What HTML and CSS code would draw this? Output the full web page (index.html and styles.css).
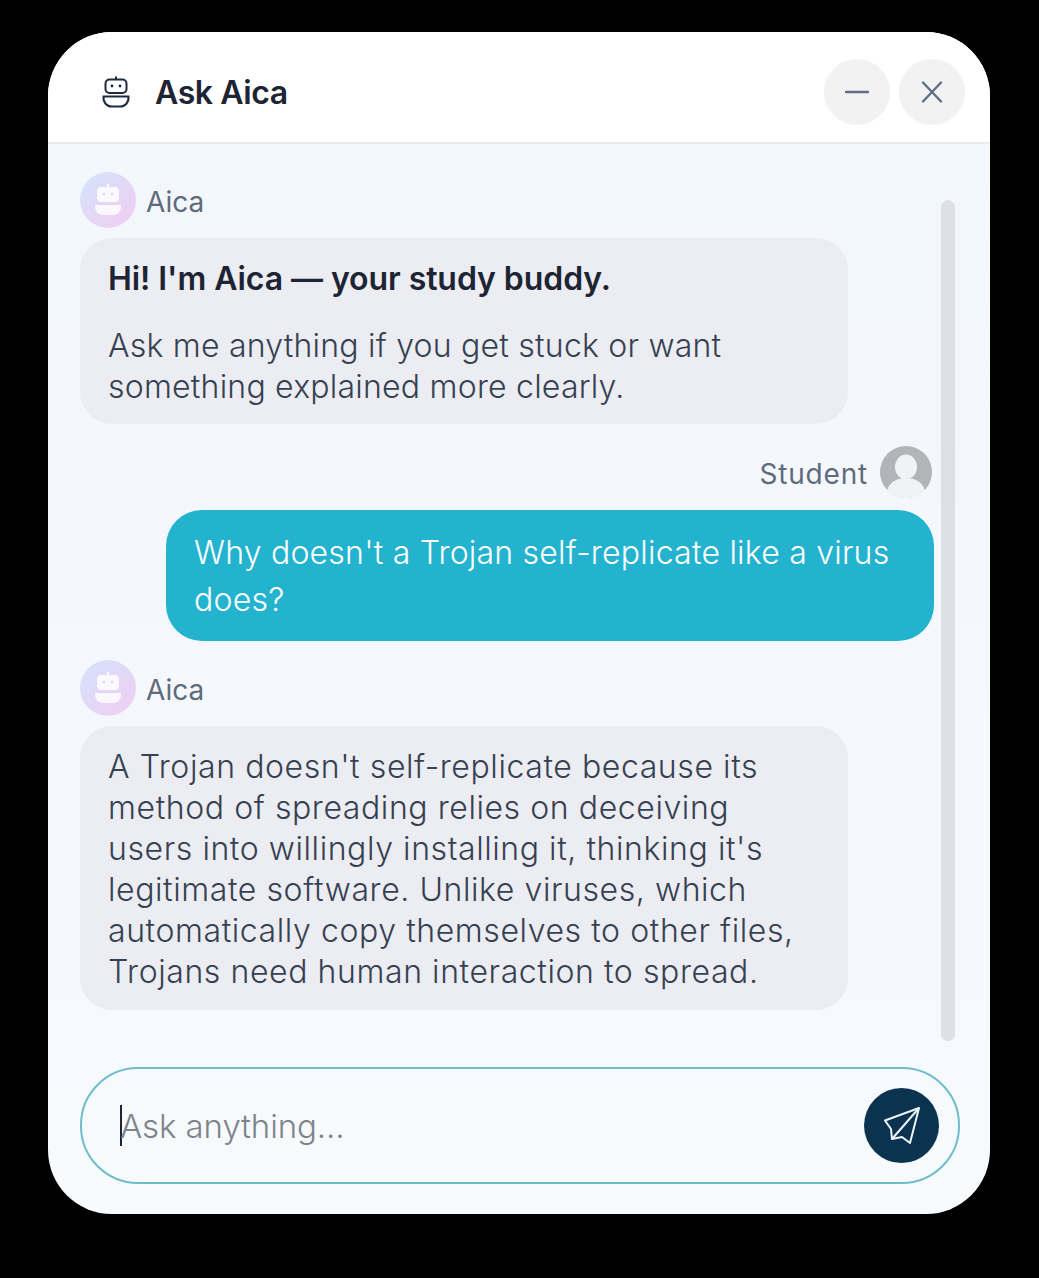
FILE: index.html
```html
<!DOCTYPE html>
<html lang="en">
<head>
  <meta charset="UTF-8" />
  <title>Ask Aica</title>
  <link rel="stylesheet" href="styles.css">
</head>
<body>
  <div class="chat-card">
    <header class="chat-header">
      <svg class="header-icon" viewBox="0 0 28 32" fill="none" stroke="#1d2a3f" stroke-width="2">
        <path d="M14 0.5v3" />
        <rect x="3.500" y="3.500" width="21" height="13.500" rx="4" />
        <circle cx="10" cy="10" r="1.400" fill="#1d2a3f" stroke="none" />
        <circle cx="18" cy="10" r="1.400" fill="#1d2a3f" stroke="none" />
        <path d="M1.500 20.500h25c0.500 6-3.500 10-8 10h-9c-4.500 0-8.500-4-8-10z" />
      </svg>
      <h1 class="chat-title">Ask Aica</h1>
      <div class="header-buttons">
        <button class="round-btn" type="button">
          <svg viewBox="0 0 24 24" stroke="#5f6f84" stroke-width="2.400" stroke-linecap="round"><path d="M1 12h22" /></svg>
        </button>
        <button class="round-btn" type="button">
          <svg viewBox="0 0 24 24" stroke="#5f6f84" stroke-width="2.400" stroke-linecap="round"><path d="M3 2.500l18 19M21 2.500l-18 19" /></svg>
        </button>
      </div>
    </header>

    <div class="chat-body">
      <div class="scrollbar"></div>

      <div class="sender">
        <span class="bot-avatar">
          <svg viewBox="0 0 28 32" fill="#fff">
            <path d="M13 0h2v4h-2z" />
            <path fill-rule="evenodd" d="M7 3h14a4 4 0 0 1 4 4v7a4 4 0 0 1-4 4H7a4 4 0 0 1-4-4V7a4 4 0 0 1 4-4zm3 5.500a1.500 1.500 0 1 0 0 3 1.500 1.500 0 0 0 0-3zm8 0a1.500 1.500 0 1 0 0 3 1.500 1.500 0 0 0 0-3z" />
            <path d="M1 21h26c0.500 6-3.500 10-8 10H9c-4.500 0-8.500-4-8-10z" />
          </svg>
        </span>
        <span class="sender-name">Aica</span>
      </div>
      <div class="bubble bubble-intro">
        <p class="bubble-lead">Hi! I'm Aica — your study buddy.</p>
        <p>Ask me anything if you get stuck or want something explained more clearly.</p>
      </div>

      <div class="sender sender-user">
        <span class="sender-name">Student</span>
        <span class="user-avatar">
          <svg viewBox="0 0 52 52">
            <circle cx="26" cy="26" r="26" fill="#b1b4b9" />
            <ellipse cx="26" cy="21" rx="11" ry="12.500" fill="#f1f2f4" />
            <path d="M7 45c2-9 10-13 19-13s17 4 19 13c-5 5-12 7-19 7S12 50 7 45z" fill="#f1f2f4" />
          </svg>
        </span>
      </div>
      <div class="bubble bubble-user">
        <p>Why doesn't a Trojan self-replicate like a virus does?</p>
      </div>

      <div class="sender">
        <span class="bot-avatar">
          <svg viewBox="0 0 28 32" fill="#fff">
            <path d="M13 0h2v4h-2z" />
            <path fill-rule="evenodd" d="M7 3h14a4 4 0 0 1 4 4v7a4 4 0 0 1-4 4H7a4 4 0 0 1-4-4V7a4 4 0 0 1 4-4zm3 5.500a1.500 1.500 0 1 0 0 3 1.500 1.500 0 0 0 0-3zm8 0a1.500 1.500 0 1 0 0 3 1.500 1.500 0 0 0 0-3z" />
            <path d="M1 21h26c0.500 6-3.500 10-8 10H9c-4.500 0-8.500-4-8-10z" />
          </svg>
        </span>
        <span class="sender-name">Aica</span>
      </div>
      <div class="bubble bubble-long">
        <p>A Trojan doesn't self-replicate because its method of spreading relies on deceiving users into willingly installing it, thinking it's legitimate software. Unlike viruses, which automatically copy themselves to other files, Trojans need human interaction to spread.</p>
      </div>

      <form class="composer">
        <span class="caret"></span>
        <span class="placeholder">Ask anything...</span>
        <button class="send-btn" type="button">
          <svg viewBox="0 0 40 40" fill="none" stroke="#eef5f8" stroke-width="2" stroke-linejoin="round">
            <path d="M37 2L3 14.500l6 8.500 1 10 10-2 8 6z" />
            <path d="M37 2L10 33" />
          </svg>
        </button>
      </form>
    </div>
  </div>
</body>
</html>
```

FILE: styles.css
```css
* {
  box-sizing: border-box;
}

body {
  margin: 0;
  background: #000;
  padding: 32px 49px 64px 48px;
  font-family: 'Inter', sans-serif;
}

.chat-card {
  width: 942px;
  height: 1182px;
  border-radius: 64px;
  overflow: hidden;
  display: flex;
  flex-direction: column;
  background: linear-gradient(180deg, #f2f7fc, #f6f9fd 85%, #f8fbfd);
}

/* Header */
.chat-header {
  height: 112px;
  flex-shrink: 0;
  background: #fff;
  border-bottom: 2px solid #e8eaed;
  display: flex;
  align-items: center;
  padding: 10px 25px 0 54px;
}

.header-icon {
  width: 28px;
  height: 32px;
}

.chat-title {
  margin: 0 0 0 25px;
  font-size: 32px;
  font-weight: 600;
  letter-spacing: -0.4px;
  color: #1d2433;
}

.header-buttons {
  margin-left: auto;
  display: flex;
  gap: 9px;
}

.round-btn {
  width: 66px;
  height: 66px;
  border: none;
  border-radius: 50%;
  background: #f2f2f3;
  padding: 0;
  display: flex;
  align-items: center;
  justify-content: center;
}

.round-btn svg {
  width: 24px;
  height: 24px;
}

/* Messages */
.chat-body {
  position: relative;
  flex: 1;
  display: flex;
  flex-direction: column;
  padding: 28px 0 0 32px;
}

.scrollbar {
  position: absolute;
  top: 56px;
  right: 35px;
  width: 14px;
  height: 841px;
  border-radius: 7px;
  background: #dde0e4;
}

.sender {
  display: flex;
  align-items: center;
  gap: 10px;
  height: 56px;
}

.sender-user {
  height: 52px;
  margin-top: 22px;
  width: 852px;
  justify-content: flex-end;
  gap: 12px;
}

.sender-name {
  padding-top: 3px;
  font-size: 28px;
  color: #5f6b7d;
}

.sender-user .sender-name {
  letter-spacing: 0.8px;
}

.bot-avatar {
  width: 56px;
  height: 56px;
  border-radius: 50%;
  background: linear-gradient(135deg, #d3e3fb, #f3cdf3);
  display: flex;
  align-items: center;
  justify-content: center;
}

.bot-avatar svg {
  width: 28px;
  height: 32px;
  opacity: 0.85;
}

.user-avatar {
  width: 52px;
  height: 52px;
}

.user-avatar svg {
  display: block;
  width: 52px;
  height: 52px;
}

.bubble {
  width: 768px;
  margin-top: 10px;
  padding: 20px 48px 18px 28px;
  border-radius: 32px;
  background: #ecedf2;
  color: #364152;
  font-size: 32px;
  font-weight: 300;
  line-height: 41px;
  letter-spacing: 0.22px;
}

.bubble p {
  margin: 0;
}

.bubble-intro {
  padding-bottom: 17px;
}

.bubble-long {
  letter-spacing: 0.58px;
}

.bubble .bubble-lead {
  margin-bottom: 26px;
  font-weight: 600;
  letter-spacing: -0.07px;
  color: #1d2433;
}

.bubble-user {
  margin: 12px 0 19px 86px;
  padding: 19px 28px 18px;
  border-radius: 36px;
  background: #23b3cf;
  color: #fff;
  line-height: 47px;
}

/* Input */
.composer {
  position: absolute;
  left: 32px;
  top: 923px;
  width: 880px;
  height: 117px;
  border: 2px solid #6fbccb;
  border-radius: 58px;
  display: flex;
  align-items: center;
  padding: 0 19px 0 38px;
}

.caret {
  width: 2px;
  height: 41px;
  background: #1d2433;
}

.placeholder {
  margin-left: -2px;
  font-size: 33px;
  font-weight: 300;
  color: #7d838c;
  letter-spacing: -0.1px;
}

.send-btn {
  margin-left: auto;
  width: 75px;
  height: 75px;
  border: none;
  border-radius: 50%;
  background: #0b3350;
  padding: 0;
  display: flex;
  align-items: center;
  justify-content: center;
}

.send-btn svg {
  width: 40px;
  height: 40px;
}
```
